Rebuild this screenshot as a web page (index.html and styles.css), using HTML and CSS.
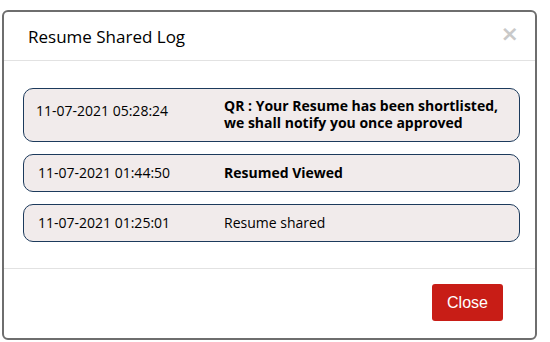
FILE: index.html
```html
<!DOCTYPE html>
<html lang="en">
<head>
    <meta charset="UTF-8">
    <meta name="viewport" content="width=device-width, initial-scale=1.0">
    <title>Resume Shared Log</title>
    <link rel="stylesheet" href="styles.css">
</head>
<body>
    <div class="modal">
        <div class="modal-header">
            <h4 class="modal-title">Resume Shared Log</h4>
            <button class="close" aria-label="Close">&times;</button>
        </div>
        <div class="modal-body">
            <div class="log-row">
                <div class="log-date">11-07-2021 05:28:24</div>
                <div class="log-msg bold">QR : Your Resume has been shortlisted, we shall notify you once approved</div>
            </div>
            <div class="log-row">
                <div class="log-date">11-07-2021 01:44:50</div>
                <div class="log-msg bold">Resumed Viewed</div>
            </div>
            <div class="log-row">
                <div class="log-date">11-07-2021 01:25:01</div>
                <div class="log-msg">Resume shared</div>
            </div>
        </div>
        <div class="modal-footer">
            <button class="btn-close">Close</button>
        </div>
    </div>
</body>
</html>
```

FILE: styles.css
```css
body {
    margin: 0;
    background: #fff;
    font-family: "Open Sans", sans-serif;
    color: #000;
}
.modal {
    margin: 10px 0 0 2px;
    width: 531px;
    height: 326px;
    border: 2px solid #6e6e6e;
    border-radius: 6px;
    background: #fff;
    display: flex;
    flex-direction: column;
}
.modal-header {
    height: 48px;
    border-bottom: 1px solid #e2e2e2;
    display: flex;
    align-items: center;
    justify-content: space-between;
    padding: 0 16px 0 24px;
}
.modal-title {
    margin: 0;
    font-size: 17px;
    font-weight: 400;
}
.close {
    border: 0;
    background: none;
    padding: 0;
    margin-top: -4px;
    font-family: "DejaVu Sans", sans-serif;
    font-size: 22px;
    font-weight: 700;
    line-height: 1;
    color: #c9c9c9;
}
.modal-body {
    padding: 27px 15px 26px 19px;
    display: flex;
    flex-direction: column;
    gap: 12px;
    border-bottom: 1px solid #e2e2e2;
}
.log-row {
    display: grid;
    grid-template-columns: 186px 1fr;
    align-items: center;
    padding: 9px 14px 10px;
    background: #f1ebeb;
    border: 1px solid #1c3a5c;
    border-radius: 10px;
    font-size: 14px;
    line-height: 17px;
}
.log-row:first-child {
    align-items: start;
    padding: 8px 14px 10px;
}
.log-row:first-child .log-date {
    padding-top: 5px;
    margin-left: -2px;
}
.bold {
    font-weight: 700;
}
.modal-footer {
    flex: 1;
    display: flex;
    align-items: flex-start;
    justify-content: flex-end;
    padding: 15px 32px 0 0;
}
.btn-close {
    width: 71px;
    height: 37px;
    border: 0;
    border-radius: 3px;
    background: #c81d16;
    color: #fff;
    font-family: "Liberation Sans", Arial, sans-serif;
    font-size: 16px;
}
```
